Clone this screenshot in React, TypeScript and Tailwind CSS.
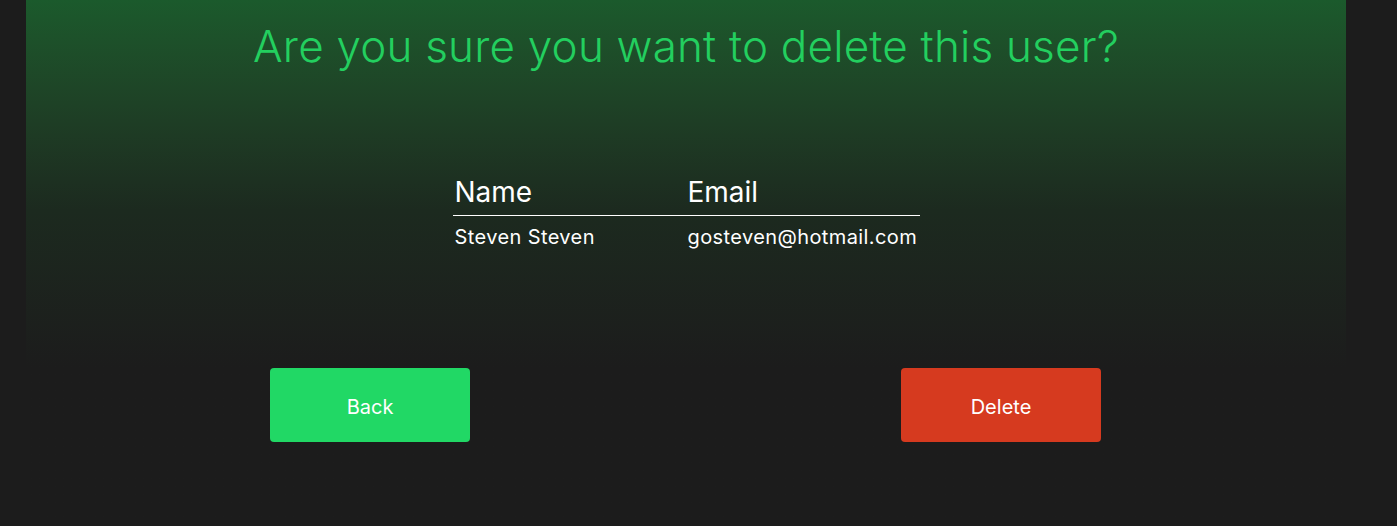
export default function App() {
  return (
    <div className="min-h-screen w-full bg-[#1c1c1c] flex" style={{ fontFamily: "Inter, 'Noto Sans', sans-serif" }}>
      <div className="ml-[26px] w-[1320px] h-[526px] bg-gradient-to-b from-[#1b5a2c] via-[#1c2a1f] via-40% to-[#1c1c1c] to-70% flex flex-col items-center">
        {/* Title */}
        <h1 className="mt-[16px] text-[44px] leading-[60px] font-light text-[#23cf5f] tracking-[0.2px]">
          Are you sure you want to delete this user?
        </h1>

        {/* User table */}
        <table className="mt-[96px] w-[467px] text-white border-collapse">
          <thead>
            <tr className="border-b border-white">
              <th className="w-[235px] text-left font-normal text-[28px] leading-[40px] pl-[2px] pb-[3px]">Name</th>
              <th className="text-left font-normal text-[28px] leading-[40px] pb-[3px]">Email</th>
            </tr>
          </thead>
          <tbody>
            <tr>
              <td className="text-[20px] leading-[40px] pl-[2px] pt-[1px] tracking-[0.4px]">Steven Steven</td>
              <td className="text-[20px] leading-[40px] pt-[1px] tracking-[0.4px]">gosteven@hotmail.com</td>
            </tr>
          </tbody>
        </table>

        {/* Actions */}
        <div className="mt-[111px] w-full pl-[244px] pr-[245px] flex justify-between">
          <button className="w-[200px] h-[74px] rounded-[4px] bg-[#21d865] text-white text-[20px] pt-[3px]">Back</button>
          <button className="w-[200px] h-[74px] rounded-[4px] bg-[#d63a1f] text-white text-[20px] pt-[3px]">Delete</button>
        </div>
      </div>
    </div>
  );
}
